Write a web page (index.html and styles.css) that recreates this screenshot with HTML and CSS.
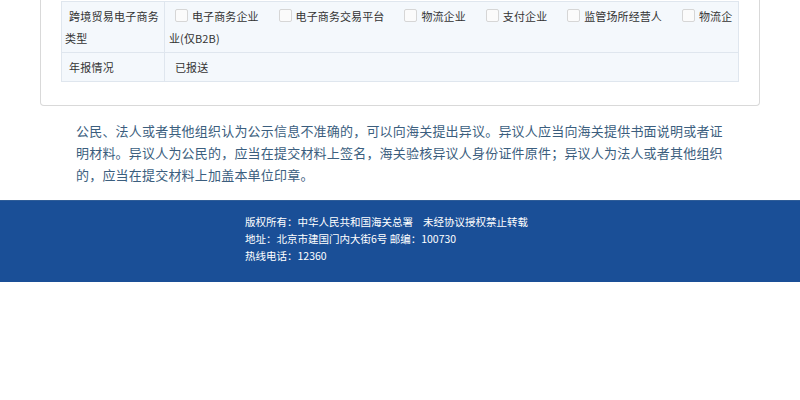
FILE: index.html
```html
<!DOCTYPE html>
<html lang="zh-CN">
<head>
    <meta charset="UTF-8">
    <title>企业信息公示</title>
    <link rel="stylesheet" href="styles.css">
</head>
<body>

    <div class="panel">
        <table class="info-table">
            <tr>
                <td class="label"><span class="indent">跨境贸易电子商务类型</span></td>
                <td class="value"><span class="opt first"><i class="box"></i>电子商务企业</span><span class="opt"><i class="box"></i>电子商务交易平台</span><span class="opt"><i class="box"></i>物流企业</span><span class="opt"><i class="box"></i>支付企业</span><span class="opt"><i class="box"></i>监管场所经营人</span><i class="box"></i>物流企业(仅B2B)</td>
            </tr>
            <tr>
                <td class="label"><span class="indent">年报情况</span></td>
                <td class="value"><span class="first-text">已报送</span></td>
            </tr>
        </table>
    </div>

    <p class="notice">
        公民、法人或者其他组织认为公示信息不准确的，可以向海关提出异议。异议人应当向海关提供书面说明或者证明材料。异议人为公民的，应当在提交材料上签名，海关验核异议人身份证件原件；异议人为法人或者其他组织的，应当在提交材料上加盖本单位印章。
    </p>

    <div class="footer">
        <div class="footer-inner">
            <div>版权所有：中华人民共和国海关总署<span class="sep"></span>未经协议授权禁止转载</div>
            <div>地址：北京市建国门内大街6号 邮编：100730</div>
            <div>热线电话：12360</div>
        </div>
    </div>

</body>
</html>
```

FILE: styles.css
```css
body {
    margin: 0;
    background-color: #fff;
    font-family: "Noto Sans CJK SC", "Noto Sans", sans-serif;
    color: #333;
}
.panel {
    margin: 0 40px;
    padding: 1px 20px 23px;
    border: 1px solid #d9d9d9;
    border-top: none;
    border-radius: 0 0 4px 4px;
    background-color: #fff;
}
.info-table {
    width: 100%;
    border-collapse: collapse;
    background-color: #f4f8fc;
    font-size: 11px;
    letter-spacing: 0.1px;
}
.info-table td {
    border: 1px solid #dfe6ee;
    padding: 3px;
    line-height: 22px;
    vertical-align: middle;
}
.info-table .label {
    width: 96px;
    letter-spacing: 0.25px;
}
.indent {
    padding-left: 4px;
}
.info-table .value {
    padding-left: 4px;
    padding-right: 0;
}
.opt {
    margin-right: 20px;
}
.opt.first {
    margin-left: 6px;
}
.first-text {
    margin-left: 6px;
}
.box {
    display: inline-block;
    width: 11px;
    height: 11px;
    margin-right: 4px;
    border: 1px solid #d6d6d6;
    border-radius: 2px;
    background-color: #fbfbfb;
    vertical-align: -1px;
}
.notice {
    width: 648px;
    margin: 14px auto 14px;
    font-size: 13px;
    line-height: 22px;
    letter-spacing: 0.2px;
    color: #3b5e7e;
}
.footer {
    height: 82px;
    background-color: #1a4f97;
    border-top: 1px solid #2f5d98;
    box-sizing: border-box;
}
.footer-inner {
    width: 310px;
    margin: 0 auto;
    padding-top: 12px;
    font-size: 10.5px;
    line-height: 17px;
    color: #fff;
}
.sep {
    display: inline-block;
    width: 10px;
}
```
